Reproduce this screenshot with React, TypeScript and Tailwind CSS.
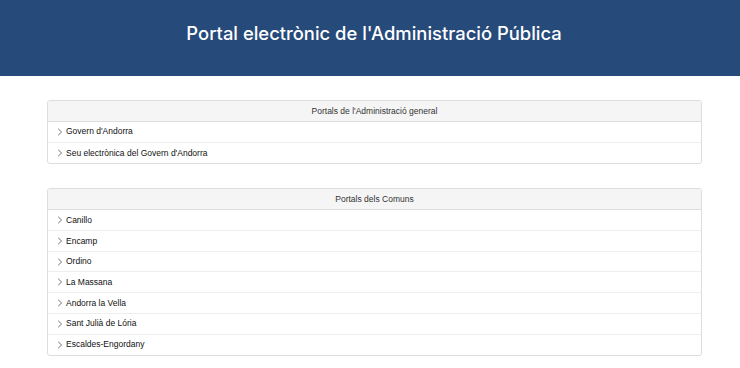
import React from "react";

const Chevron = () => (
  <svg width="6" height="8" viewBox="0 0 6 8" className="shrink-0">
    <path d="M1.2 0.8 L4.6 4 L1.2 7.2" fill="none" stroke="#666" strokeWidth="0.9" />
  </svg>
);

function Panel({ title, items }: { title: string; items: string[] }) {
  return (
    <div className="border border-[#dddddd] rounded-[3px] overflow-hidden">
      <div className="bg-[#f5f5f5] h-[21px] flex items-center justify-center text-[8.5px] text-[#333] border-b border-[#dddddd]">
        {title}
      </div>
      {items.map((it, i) => (
        <div
          key={it}
          className={`h-[20.7px] flex items-center gap-[3px] pl-[9px] text-[8.5px] text-[#111] ${
            i < items.length - 1 ? "border-b border-[#eeeeee]" : ""
          }`}
        >
          <Chevron />
          <span>{it}</span>
        </div>
      ))}
    </div>
  );
}

export default function App() {
  return (
    <div className="w-[740px] h-[368px] bg-white" style={{ fontFamily: "'Liberation Sans', Arial, sans-serif" }}>
      <div className="h-[76px] bg-[#264a7a] flex justify-center pt-[20px] pl-[8px]">
        <h1 className="text-white text-[18.4px] leading-[26px] font-medium" style={{ fontFamily: "Inter, 'Noto Sans', sans-serif" }}>
          Portal electrònic de l'Administració Pública
        </h1>
      </div>
      <div className="px-[47px] pt-[24px] flex flex-col gap-[24px] w-[749px]">
        <Panel title="Portals de l'Administració general" items={["Govern d'Andorra", "Seu electrònica del Govern d'Andorra"]} />
        <Panel
          title="Portals dels Comuns"
          items={["Canillo", "Encamp", "Ordino", "La Massana", "Andorra la Vella", "Sant Julià de Lória", "Escaldes-Engordany"]}
        />
      </div>
    </div>
  );
}
